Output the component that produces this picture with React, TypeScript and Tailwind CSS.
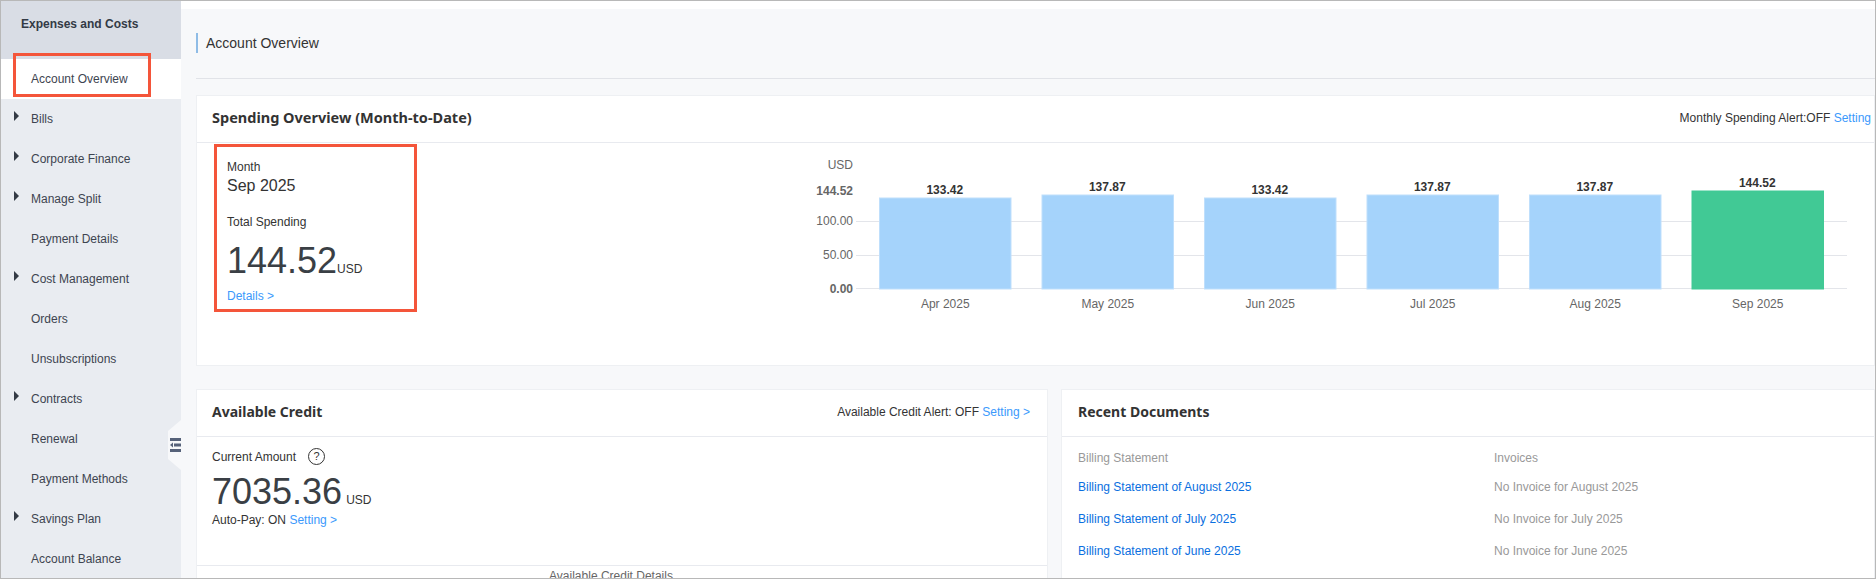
import React from 'react';

const NAV_ITEMS = [
  { label: 'Account Overview', active: true },
  { label: 'Bills', arrow: true },
  { label: 'Corporate Finance', arrow: true },
  { label: 'Manage Split', arrow: true },
  { label: 'Payment Details' },
  { label: 'Cost Management', arrow: true },
  { label: 'Orders' },
  { label: 'Unsubscriptions' },
  { label: 'Contracts', arrow: true },
  { label: 'Renewal' },
  { label: 'Payment Methods' },
  { label: 'Savings Plan', arrow: true },
  { label: 'Account Balance' },
];

const BARS = [
  { label: 'Apr 2025', value: '133.42', top: 198 },
  { label: 'May 2025', value: '137.87', top: 195 },
  { label: 'Jun 2025', value: '133.42', top: 198 },
  { label: 'Jul 2025', value: '137.87', top: 195 },
  { label: 'Aug 2025', value: '137.87', top: 195 },
  { label: 'Sep 2025', value: '144.52', top: 191, current: true },
];

const DOCS = [
  ['Billing Statement of August 2025', 'No Invoice for August 2025'],
  ['Billing Statement of July 2025', 'No Invoice for July 2025'],
  ['Billing Statement of June 2025', 'No Invoice for June 2025'],
];

const Sidebar: React.FC = () => (
  <aside className="relative w-[180px] shrink-0 bg-[#e9ecf1] text-[12px] text-[#3d4450]">
    <div className="h-[58px] bg-[#d9dde5] pl-[20px] pt-[16px] font-bold leading-[15px] text-[#333a45]">
      Expenses and Costs
    </div>
    {NAV_ITEMS.map((item) => (
      <div
        key={item.label}
        className={`relative flex h-[40px] items-center pl-[30px] ${item.active ? 'bg-white' : ''}`}
      >
        {item.arrow && (
          <span className="absolute left-[13px] top-[12px] h-0 w-0 border-y-[5px] border-l-[5px] border-y-transparent border-l-[#333a45]" />
        )}
        {item.label}
      </div>
    ))}
    <div className="absolute left-[12px] top-[52px] h-[44px] w-[138px] border-[3px] border-[#f4553a]" />
    <div className="absolute right-0 top-[419px] flex h-[50px] w-[13px] items-center justify-end bg-[#f7f8fa] [clip-path:polygon(100%_0,100%_100%,0_78%,0_22%)]">
      <svg width="11" height="14" viewBox="0 0 11 14" fill="#56627a">
        <rect x="0" y="0" width="11" height="3" />
        <rect x="4" y="5.5" width="7" height="3" />
        <rect x="0" y="11" width="11" height="3" />
        <path d="M3 4.5v5L0 7z" />
      </svg>
    </div>
  </aside>
);

const SpendingChart: React.FC = () => (
  <svg width="1075" height="200" viewBox="799 143 1075 200" className="shrink-0" fontFamily="'Liberation Sans', Arial, sans-serif" fontSize="12">
    {[221.5, 255.5, 288.5].map((y) => (
      <line key={y} x1="856" x2="1847" y1={y} y2={y} stroke="#e3e5ea" />
    ))}
    <text x="853" y="169" textAnchor="end" fill="#666">USD</text>
    <text x="853" y="195" textAnchor="end" fill="#666" fontWeight="bold">144.52</text>
    <text x="853" y="225" textAnchor="end" fill="#666">100.00</text>
    <text x="853" y="259" textAnchor="end" fill="#666">50.00</text>
    <text x="853" y="293" textAnchor="end" fill="#666" fontWeight="bold">0.00</text>
    {BARS.map((bar, i) => {
      const x = 879.5 + i * 162.5;
      const cx = x + 65.75;
      return (
        <g key={bar.label}>
          <rect
            x={x}
            y={bar.top}
            width="131.5"
            height={289 - bar.top}
            fill={bar.current ? '#41c995' : '#a2d2fb'}
            fillOpacity={bar.current ? 1 : 0.97}
            stroke={bar.current ? '#41c995' : '#bfdffc'}
            strokeWidth="1"
          />
          <text x={cx - 0.5} y={bar.top - 4} textAnchor="middle" fill="#333" fontWeight="bold">{bar.value}</text>
          <text x={cx} y="308" textAnchor="middle" fill="#666">{bar.label}</text>
        </g>
      );
    })}
  </svg>
);

const CardTitle: React.FC<{ children: React.ReactNode; large?: boolean }> = ({ children, large }) => (
  <h2 className={`font-['Noto_Sans','Open_Sans',sans-serif] font-bold text-[#333] ${large ? 'text-[14.5px]' : 'text-[14px]'}`}>
    {children}
  </h2>
);

export default function App() {
  return (
    <div className="flex h-[579px] w-[1876px] overflow-hidden border border-[#b8b8b8] bg-[#f7f8fa] font-['Liberation_Sans',Arial,sans-serif] text-[12px] text-[#333]">
      <Sidebar />
      <main className="min-w-0 flex-1 pl-[15px]">
        <div className="-ml-[15px] h-[8px] bg-white" />
        <div className="mb-[16px] h-[70px] border-b border-[#e1e3e8] pt-[24px]">
          <div className="h-[20px] border-l-2 border-[#8fbce6] pl-[8px] text-[14px] leading-[20px] text-[#333]">
            Account Overview
          </div>
        </div>

        <section className="h-[271px] border border-[#eef0f3] bg-white">
          <header className="flex h-[47px] items-center justify-between border-b border-[#e8eaef] pb-[3px] pl-[15px] pr-[3px]">
            <CardTitle large>Spending Overview (Month-to-Date)</CardTitle>
            <div>
              Monthly Spending Alert:OFF <a className="text-[#3b99fc]">Setting</a>
            </div>
          </header>
          <div className="flex justify-between">
            <div className="ml-[17px] mt-px h-[168px] w-[203px] border-[3px] border-[#f4553a] pl-[10px] pt-[13px]">
              <div className="leading-[14px]">Month</div>
              <div className="mt-[2px] text-[16px] leading-[20px]">Sep 2025</div>
              <div className="mt-[19px] leading-[14px]">Total Spending</div>
              <div className="mt-[11px] flex items-baseline leading-[42px]">
                <span className="text-[36px] text-[#3a3f45]">144.52</span>
                <span className="text-[12px]">USD</span>
              </div>
              <a className="mt-[-1px] block leading-[14px] text-[#3b99fc]">Details &gt;</a>
            </div>
            <SpendingChart />
          </div>
        </section>

        <div className="mt-[23px] flex gap-[13px]">
          <section className="h-[300px] w-[852px] shrink-0 border border-[#eef0f3] bg-white">
            <header className="flex h-[47px] items-center justify-between border-b border-[#e8eaef] pb-[3px] pl-[15px] pr-[17px]">
              <CardTitle>Available Credit</CardTitle>
              <div>
                Available Credit Alert: OFF <a className="text-[#3b99fc]">Setting &gt;</a>
              </div>
            </header>
            <div className="h-[129px] border-b border-[#e8eaef] pl-[15px] pt-[11px]">
              <div className="flex items-center gap-[12px] leading-[16px]">
                Current Amount
                <span className="flex h-[17px] w-[17px] items-center justify-center rounded-full border border-[#333] text-[11px] leading-none">?</span>
              </div>
              <div className="mt-[6px] flex items-baseline gap-[4px] leading-[42px]">
                <span className="text-[36px] text-[#3a3f45]">7035.36</span>
                <span className="text-[12px]">USD</span>
              </div>
              <div className="mt-[-8px] leading-[14px]">
                Auto-Pay: ON <a className="text-[#3b99fc]">Setting &gt;</a>
              </div>
            </div>
            <div className="pr-[22px] pt-[3px] text-center leading-[14px] text-[#666]">Available Credit Details</div>
          </section>

          <section className="h-[300px] min-w-0 flex-1 border border-[#eef0f3] bg-white">
            <header className="flex h-[47px] items-center border-b border-[#e8eaef] pb-[3px] pl-[16px]">
              <CardTitle>Recent Documents</CardTitle>
            </header>
            <div className="grid grid-cols-[416px_1fr] pl-[16px] pt-[14px] text-[#999]">
              <div className="h-[20px] leading-[14px]">Billing Statement</div>
              <div className="h-[20px] leading-[14px]">Invoices</div>
              {DOCS.map(([statement, invoice]) => (
                <React.Fragment key={statement}>
                  <a className="flex h-[32px] items-center text-[#0a6fe0]">{statement}</a>
                  <div className="flex h-[32px] items-center">{invoice}</div>
                </React.Fragment>
              ))}
            </div>
          </section>
        </div>
      </main>
    </div>
  );
}
